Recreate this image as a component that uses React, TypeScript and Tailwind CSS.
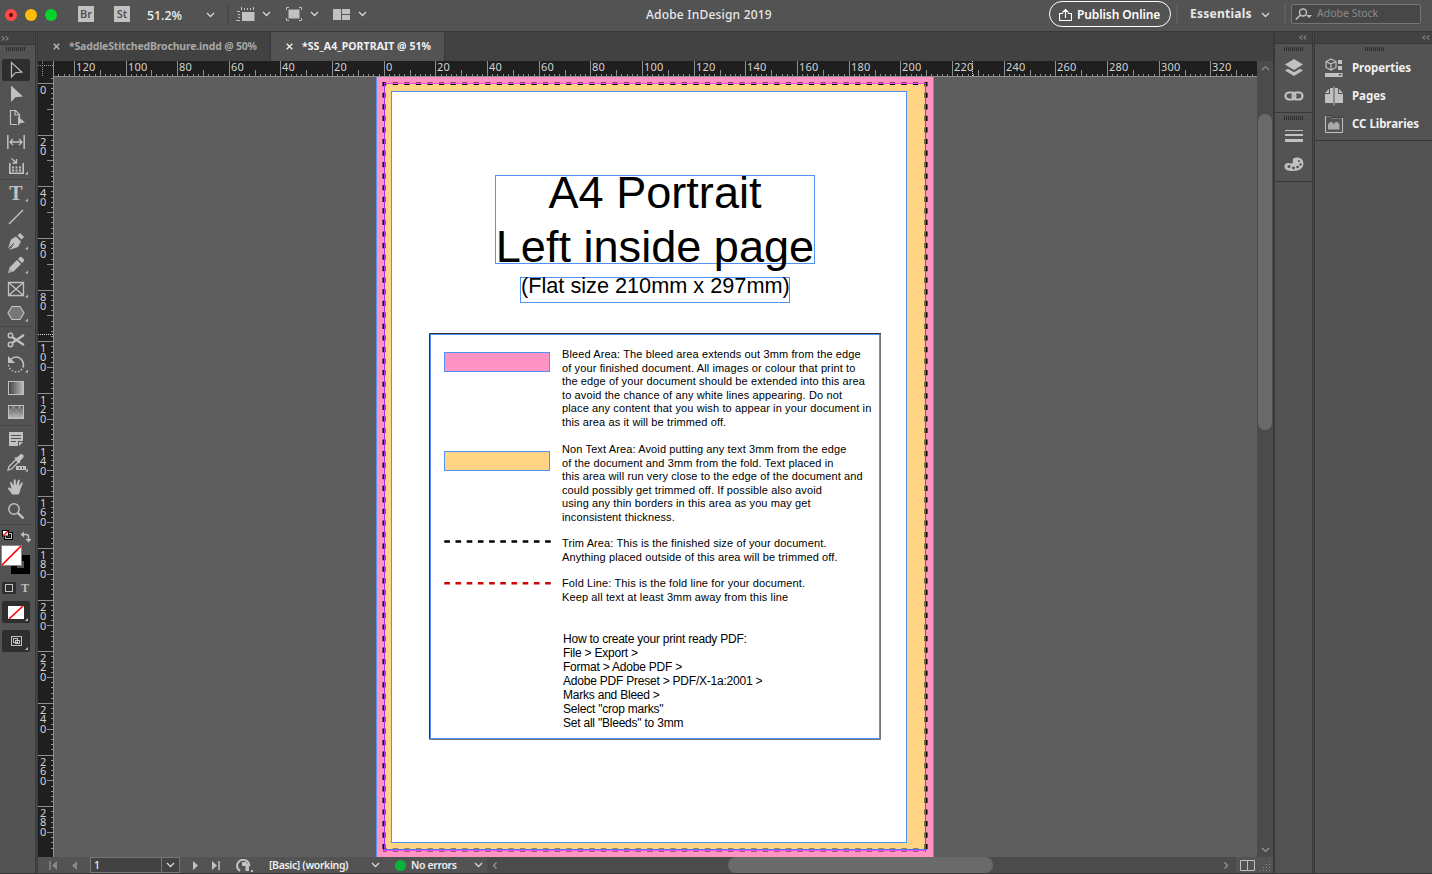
import type { ReactNode } from "react";

const ui = "font-['Noto_Sans',sans-serif]";
const doc = "font-['Liberation_Sans',sans-serif]";

function Chevron({ className = "" }: { className?: string }) {
  return (
    <svg width="9" height="6" viewBox="0 0 9 6" className={className}>
      <path d="M1 1l3.500 3.500L8 1" fill="none" stroke="#d6d6d6" strokeWidth="1.300" />
    </svg>
  );
}

function Grip() {
  return (
    <svg width="20" height="4" viewBox="0 0 20 4" className="block">
      {Array.from({ length: 10 }, (_, i) => (
        <rect key={i} x={i * 2} y="0" width="1" height="4" fill="#2e2e2e" />
      ))}
    </svg>
  );
}

function Collapse({ flip = false }: { flip?: boolean }) {
  return (
    <svg width="8" height="5" viewBox="0 0 8 5" className={flip ? "rotate-180" : ""}>
      <path d="M3 .5L1 2.500l2 2M7 .5l-2 2 2 2" fill="none" stroke="#b4b4b4" strokeWidth="1" />
    </svg>
  );
}

// Application bar

function AppBar() {
  return (
    <header className="flex h-[31px] shrink-0 items-center bg-[#535353] pb-[3px]">
      <div className="flex w-[78px] items-center gap-[8px] pl-[5px] pt-[2px]">
        <span className="flex size-[12px] items-center justify-center rounded-full bg-[#ff4b47]">
          <span className="size-[4px] rounded-full bg-[#5c0000]" />
        </span>
        <span className="size-[12px] rounded-full bg-[#ffbd05]" />
        <span className="size-[12px] rounded-full bg-[#06d32c]" />
      </div>
      <span className="flex h-[16px] w-[16px] items-center justify-center bg-[#c1c1c1] text-[11px] font-semibold text-[#535353]">
        Br
      </span>
      <span className="ml-[20px] flex h-[16px] w-[16px] items-center justify-center bg-[#c1c1c1] text-[11px] font-semibold text-[#535353]">
        St
      </span>
      <span className="ml-[17px] w-[59px] pt-[4px] text-[12.3px] font-medium text-[#f2f2f2]">51.2%</span>
      <Chevron className="mt-[2px]" />
      <span className="ml-[12px] h-[20px] w-[2px] bg-[#4a4a4a]" />
      <svg width="19" height="16" viewBox="0 0 19 16" className="ml-[7px] mt-px">
        <rect x="6" y="5" width="12.500" height="9" fill="#c1c1c1" />
        <path d="M5.500 3V0M8.500 3V1M11.500 3V1M14.500 3V1M17.500 3V0" stroke="#c1c1c1" />
        <path d="M4 4.500H1M4 7.500H2M4 10.500H2M4 13.500H0" stroke="#c1c1c1" />
      </svg>
      <Chevron className="ml-[7px]" />
      <svg width="16" height="14" viewBox="0 0 16 14" className="ml-[15px]">
        <rect x="2.500" y="2.500" width="11" height="9" fill="#c1c1c1" />
        <path d="M.5 3V.5H3M13 .5h2.500V3M.5 11v2.500H3M13 13.500h2.500V11" fill="none" stroke="#c1c1c1" />
      </svg>
      <Chevron className="ml-[8px]" />
      <svg width="17" height="11" viewBox="0 0 17 11" className="ml-[14px]">
        <path d="M0 0h8v11H0zM9 0h8v5H9zM9 6h8v5H9z" fill="#c1c1c1" />
      </svg>
      <Chevron className="ml-[8px]" />
      <h1 className="ml-[279px] w-[403px] pt-px text-[12px] font-medium tracking-[0.2px] text-[#e8e8e8]">
        Adobe InDesign 2019
      </h1>
      <button className="flex h-[26px] w-[122px] items-center rounded-full border-[1.5px] border-white pl-[9px] text-[12px] font-semibold text-white">
        <svg width="13" height="13" viewBox="0 0 13 13" className="mr-[5px]">
          <path d="M4 5.500H.5v7h12v-7H9M6.500 10V2M3.500 4.500l3-3 3 3" fill="none" stroke="#fff" strokeWidth="1.200" />
        </svg>
        <span className="whitespace-nowrap pt-px tracking-[-0.1px]">Publish Online</span>
      </button>
      <span className="ml-[5px] h-[20px] w-[2px] bg-[#5e5e5e]" />
      <span className="ml-[12px] w-[71px] text-[12px] font-bold tracking-[0.25px] text-[#e8e8e8]">Essentials</span>
      <Chevron className="mt-px" />
      <span className="ml-[14px] h-[20px] w-[2px] bg-[#5e5e5e]" />
      <div className="ml-[5px] flex h-[20px] w-[130px] items-center rounded-[2px] border border-[#757575] bg-[#474747] pl-[3px]">
        <svg width="17" height="13" viewBox="0 0 17 13">
          <circle cx="8" cy="4.500" r="3.500" fill="none" stroke="#c1c1c1" strokeWidth="1.400" />
          <path d="M5.500 7L.8 11.500" stroke="#c1c1c1" strokeWidth="1.600" />
          <path d="M11 7h6l-3 3z" fill="#c1c1c1" />
        </svg>
        <span className="ml-[5px] text-[10.5px] text-[#8b8b8b]">Adobe Stock</span>
      </div>
    </header>
  );
}

// Toolbox

const g = "#c1c1c1";

function Tool({ children, more = false, active = false }: { children: ReactNode; more?: boolean; active?: boolean }) {
  return (
    <div className="h-[24px] w-[35px]">
      <svg width="35" height="24" viewBox="0 0 35 24" className="block">
        {active && <rect x="2" y="1" width="28" height="22" rx="2" fill="#2e2e2e" />}
        {children}
        {more && <path d="M28 17.500v3h-3z" fill={g} />}
      </svg>
    </div>
  );
}

function ToolRule() {
  return <div className="h-px w-[34px] bg-[#474747]" />;
}

function Toolbox() {
  return (
    <aside className="flex w-[35px] shrink-0 flex-col bg-[#535353]">
      <div className="flex h-[12px] items-center bg-[#424242] pl-[1px]">
        <Collapse flip />
      </div>
      <div className="flex h-[14px] items-start border-t border-[#383838] pl-[6px] pt-[2px]">
        <Grip />
      </div>
      <Tool active>
        <path d="M11.500 4.500v14.500l4-4.300 6.300-.7z" fill="none" stroke={g} strokeWidth="1.200" />
      </Tool>
      <Tool>
        <path d="M11 3.500V20l4.500-4.800 7.500-.7z" fill={g} />
      </Tool>
      <Tool>
        <path d="M17 18.500h-6.500v-14h5l4 4V12M15 4.500V9h4.500" fill="none" stroke={g} strokeWidth="1.200" />
        <path d="M18 10.500v9l2.500-2.500 4.500-.5z" fill={g} />
      </Tool>
      <Tool>
        <path d="M7.800 5v14M24.200 5v14" stroke={g} strokeWidth="1.500" />
        <path d="M10 12h12M13 9l-3 3 3 3M19 9l3 3-3 3" fill="none" stroke={g} strokeWidth="1.300" />
      </Tool>
      <Tool more>
        <path d="M9.800 9v10.200h13.400V9" fill="none" stroke={g} strokeWidth="1.600" />
        <path d="M12 12.500h2v2h-2zM15.500 12.500h2v2h-2zM19 12.500h2v2h-2zM12 15.500h2v2h-2zM15.500 15.500h2v2h-2zM19 15.500h2v2h-2z" fill={g} />
        <path d="M11.500 4.500l4.500 4M16.500 5v4h-4" fill="none" stroke={g} strokeWidth="1.300" />
      </Tool>
      <div className="flex h-[3px] items-center">
        <ToolRule />
      </div>
      <Tool more>
        <text x="16" y="18.500" textAnchor="middle" fill={g} fontSize="20" fontWeight="700" fontFamily="Liberation Serif, serif">
          T
        </text>
      </Tool>
      <Tool>
        <path d="M9 19L23 5" stroke={g} strokeWidth="1.500" />
      </Tool>
      <Tool more>
        <path d="M8 19.500l3-9 5-3 5 5-3 5.500-9 3 5.500-5.500" fill={g} />
        <path d="M9 19l5-5" stroke="#535353" />
        <path d="M17.500 6.500L20 4l4 4-2.500 2.500z" fill={g} />
      </Tool>
      <Tool more>
        <path d="M8 20l1.500-5.500L17 7l4 4-7.500 7.500zM18 6l2-2q1-.5 2 .5l1.500 1.500q1 1 .5 2l-2 2z" fill={g} />
        <path d="M9.500 17l1.700 1.700" stroke="#535353" />
      </Tool>
      <Tool more>
        <path d="M8.500 5.500h15v13h-15zM8.500 5.500l15 13M23.500 5.500l-15 13" fill="none" stroke={g} strokeWidth="1.300" />
      </Tool>
      <Tool more>
        <path d="M12 5.500h8l4 6.500-4 6.500h-8L8 12z" fill="#777" stroke={g} strokeWidth="1.200" />
      </Tool>
      <div className="flex h-[3px] items-center">
        <ToolRule />
      </div>
      <Tool>
        <circle cx="10.500" cy="7.500" r="2.200" fill="none" stroke={g} strokeWidth="1.500" />
        <circle cx="10.500" cy="16.500" r="2.200" fill="none" stroke={g} strokeWidth="1.500" />
        <path d="M12 9l12 8M12 15l12-8" stroke={g} strokeWidth="2.200" />
      </Tool>
      <Tool more>
        <path d="M10.500 7.500q6-5 11 0 3 4 1.500 8" fill="none" stroke={g} strokeWidth="1.600" />
        <path d="M8 4v7h7z" fill={g} />
        <path d="M22 17q-4 5-10 1.500-3-2-3.500-6" fill="none" stroke={g} strokeWidth="1.400" strokeDasharray="1.500 1.800" />
      </Tool>
      <Tool>
        <defs>
          <linearGradient id="swatchH">
            <stop offset="0" stopColor="#444" />
            <stop offset="1" stopColor="#bbb" />
          </linearGradient>
          <linearGradient id="swatchV" x2="0" y2="1">
            <stop offset="0" stopColor="#555" />
            <stop offset="1" stopColor="#bbb" />
          </linearGradient>
        </defs>
        <rect x="8.500" y="5.500" width="15" height="13" fill="url(#swatchH)" stroke={g} />
      </Tool>
      <Tool>
        <rect x="8.500" y="5.500" width="15" height="13" fill="url(#swatchV)" stroke={g} />
        <path d="M12 6h3v3h-3zM18 6h3v3h-3zM9 9h3v3H9zM15 9h3v3h-3zM21 9h2v3h-2z" fill="#868686" />
      </Tool>
      <div className="flex h-[3px] items-center">
        <ToolRule />
      </div>
      <Tool>
        <path d="M9 5h14v9h-5v5H9zM19 15h4l-4 4z" fill={g} />
        <path d="M11 8.500h10M11 11.500h10M11 14.500h5" stroke="#535353" />
      </Tool>
      <Tool more>
        <path d="M8 19l1-3.500 7-7 2.500 2.500-7 7z" fill="none" stroke={g} strokeWidth="1.300" />
        <path d="M14.500 7l1.500-1 1 .5L20 3.500q2-1 3 0 1.500 1.500 0 3.500L20 10l.5 1-1.500 1.500z" fill={g} />
        <path d="M16 15h10v4H16z" fill={g} />
        <path d="M19.500 16v2M22.500 16v2" stroke="#535353" />
      </Tool>
      <Tool>
        <path
          d="M12 19.500q-1-2.500-4-5.500-.5-2 1.500-1.500l2 1.500L10 7.500q.8-1.500 1.800 0L13.500 11 13.700 5q1-1.500 2 0l.3 5.500L18 5q1.200-1 1.800.5L18.800 11l2.700-3.500q1.500-.5 1.300 1L20.500 14q-.5 3.500-2 5.500z"
          fill={g}
        />
      </Tool>
      <Tool>
        <circle cx="14" cy="10" r="5.200" fill="none" stroke={g} strokeWidth="1.500" />
        <path d="M17.800 13.800l5.700 5.700" stroke={g} strokeWidth="2.400" />
      </Tool>
      <div className="flex h-[3px] items-center">
        <ToolRule />
      </div>
      <svg width="35" height="130" viewBox="0 526 35 130" className="block">
        <rect x="5.500" y="533.500" width="6" height="5" fill="none" stroke="#000" strokeWidth="3" />
        <rect x="5.500" y="533.500" width="6" height="5" fill="none" stroke={g} strokeWidth="1" />
        <rect x="2.500" y="530.500" width="6" height="5.500" fill="#fff" stroke="#000" />
        <path d="M3 536l5-5" stroke="#f00" strokeWidth="1.200" />
        <path d="M23 534.500h3.500q2 0 2 2v4" fill="none" stroke={g} strokeWidth="1.500" />
        <path d="M24 531.500v6l-3.500-3zM25.500 539h6l-3 3.500z" fill={g} />
        <path d="M11 555h19v19H11zM17 561v7h7v-7z" fill="#000" fillRule="evenodd" />
        <rect x="1.500" y="545.500" width="20" height="20" fill="#fff" stroke="#888" />
        <path d="M2 565l19-19" stroke="#f00" strokeWidth="1.700" />
        <rect x="2" y="582" width="14" height="12" rx="1.500" fill="#2e2e2e" />
        <rect x="5.500" y="584.500" width="7" height="7" fill="none" stroke={g} />
        <text x="25" y="592" textAnchor="middle" fill={g} fontSize="12" fontWeight="700" fontFamily="Liberation Serif, serif">
          T
        </text>
        <rect x="2" y="601" width="28" height="22" rx="2" fill="#2e2e2e" />
        <rect x="8" y="606" width="16" height="13" fill="#fff" />
        <path d="M9 619l14-13" stroke="#f00" strokeWidth="1.700" />
        <path d="M28 618v3h-3z" fill={g} />
        <rect x="2" y="630" width="28" height="22" rx="2" fill="#2e2e2e" />
        <rect x="11.500" y="636.500" width="10" height="9" fill="none" stroke={g} />
        <rect x="13.500" y="638.500" width="4" height="4" fill="none" stroke={g} />
        <rect x="15.500" y="640.500" width="4" height="3" fill="none" stroke={g} />
        <path d="M28 647v3h-3z" fill={g} />
      </svg>
    </aside>
  );
}

// Rulers: 20mm is 51.66px on screen

const STEP = 5.166;

function TopRuler() {
  const ticks = Array.from({ length: 240 }, (_, i) => i - 70).filter((n) => {
    const x = 346.3 + n * STEP;
    return x > 15 && x < 1219;
  });
  return (
    <svg width="1219" height="16" viewBox="0 0 1219 16" className="block shrink-0 bg-[#1f1f1f]">
      <path d="M0 4.500h15M4.500 0v15" stroke="#999" strokeDasharray="1 1" />
      <path d="M15.500 0v16" stroke="#8f8f8f" />
      {ticks.map((n) => {
        const x = Math.floor(346.3 + n * STEP) + 0.5;
        const top = n % 10 === 0 ? 0 : n % 5 === 0 ? 9 : 13;
        return <path key={n} d={`M${x} ${top}V16`} stroke="#8f8f8f" />;
      })}
      {ticks
        .filter((n) => n % 10 === 0)
        .map((n) => (
          <text
            key={n}
            x={Math.floor(346.3 + n * STEP) + 2}
            y="10"
            fill="#d2d2d2"
            fontSize="11"
            letterSpacing="0.2"
            fontFamily="Noto Sans, sans-serif"
          >
            {Math.abs(n * 2)}
          </text>
        ))}
      <path d="M934.500 0v16" stroke="#ddd" strokeDasharray="1 1" />
      <path d="M15 15.500h1204" stroke="#8f8f8f" />
    </svg>
  );
}

function SideRuler() {
  const ticks = Array.from({ length: 150 }, (_, i) => i - 1);
  return (
    <svg width="16" height="780" viewBox="0 77 16 780" className="block shrink-0 bg-[#1f1f1f]">
      {ticks.map((n) => {
        const y = Math.floor(83.5 + n * STEP) + 0.5;
        const left = n % 10 === 0 ? 0 : n % 5 === 0 ? 9 : 13;
        return <path key={n} d={`M${left} ${y}H16`} stroke="#8f8f8f" />;
      })}
      {ticks
        .filter((n) => n % 10 === 0)
        .map((n) => (
          <text
            key={n}
            y={Math.floor(83.5 + n * STEP) + 2}
            fill="#d2d2d2"
            fontSize="11"
            fontFamily="Noto Sans, sans-serif"
          >
            {String(n * 2)
              .split("")
              .map((d, i) => (
                <tspan key={i} x="2" dy="9.2">
                  {d}
                </tspan>
              ))}
          </text>
        ))}
      <path d="M0 334.500h16" stroke="#ddd" strokeDasharray="1 1" />
      <path d="M15.500 77v780" stroke="#8f8f8f" />
    </svg>
  );
}

// Document page

const bleedText = [
  "Bleed Area: The bleed area extends out 3mm from the edge",
  "of your finished document. All images or colour that print to",
  "the edge of your document should be extended into this area",
  "to avoid the chance of any white lines appearing. Do not",
  "place any content that you wish to appear in your document in",
  "this area as it will be trimmed off.",
];
const nonText = [
  "Non Text Area: Avoid putting any text 3mm from the edge",
  "of the document and 3mm from the fold. Text placed in",
  "this area will run very close to the edge of the document and",
  "could possibly get trimmed off. If possible also avoid",
  "using any thin borders in this area as you may get",
  "inconsistent thickness.",
];
const trimText = ["Trim Area: This is the finished size of your document.", "Anything placed outside of this area will be trimmed off."];
const foldText = ["Fold Line: This is the fold line for your document.", "Keep all text at least 3mm away from this line"];
const howTo = [
  "How to create your print ready PDF:",
  "File > Export >",
  "Format > Adobe PDF >",
  "Adobe PDF Preset > PDF/X-1a:2001 >",
  "Marks and Bleed >",
  'Select "crop marks"',
  'Set all "Bleeds" to 3mm',
];

function Lines({ lines, className }: { lines: string[]; className: string }) {
  return (
    <div className={`absolute whitespace-nowrap ${className}`}>
      {lines.map((line) => (
        <p key={line}>{line}</p>
      ))}
    </div>
  );
}

function Page() {
  return (
    <div className={`absolute left-[322px] top-0 h-[780px] w-[558px] text-black ${doc}`}>
      <svg width="558" height="780" viewBox="376 77 558 780" className="absolute inset-0">
        <rect x="376" y="77" width="558" height="780" fill="#ff94c4" />
        <rect x="384" y="83" width="542" height="767" fill="#ffd484" />
        <rect x="391.500" y="91.500" width="515" height="751" fill="#fff" stroke="#4f94f5" />
        <path d="M376.500 77v780M933.500 77v780" stroke="#4f94f5" />
        <path d="M383 82.500h543" stroke="#000" strokeOpacity=".5" strokeDasharray="5.200 6.360" strokeDashoffset="1.800" />
        <path d="M383 84h543" stroke="#000" strokeWidth="2" strokeDasharray="5.200 6.360" strokeDashoffset="1.800" />
        <path d="M383.500 82v768M926.500 82v768" stroke="#000" strokeWidth="2" strokeDasharray="5.200 6.360" strokeDashoffset=".9" />
        <path
          d="M385.500 82v768M924.500 82v768"
          stroke="#000"
          strokeOpacity=".5"
          strokeDasharray="5.200 6.360"
          strokeDashoffset=".9"
        />
        <path d="M383 850h543" stroke="#000" strokeOpacity=".38" strokeWidth="4" strokeDasharray="5.500 6.060" strokeDashoffset="1.800" />
        <path d="M384 83.500h541.500" stroke="#ee48dc" />
        <path d="M384.500 83v767M925.500 83v767" stroke="#a02ff0" />
        <path d="M384 850.500h542" stroke="#ee48f0" />
        <path d="M385 849.500h540" stroke="#4f74f5" />
        <path d="M429.500 739V333.500H881" fill="none" stroke="#333" />
        <path d="M880.500 334v405.500H429.500" fill="none" stroke="#777" />
        <rect x="430.500" y="334.500" width="449" height="404" fill="none" stroke="#4f94f5" />
        <rect x="444.500" y="352.500" width="105" height="19" fill="#ff94c4" stroke="#4f94f5" />
        <rect x="444.500" y="451.500" width="105" height="19" fill="#ffd484" stroke="#4f94f5" />
        <path d="M444.300 541.500h106.500" stroke="#000" strokeWidth="2.500" strokeDasharray="5.600 5.600" />
        <path d="M444.300 583.300h106.500" stroke="#d40000" strokeWidth="2.500" strokeDasharray="5.600 5.600" />
      </svg>
      <div className="absolute left-[119px] top-[98px] h-[89px] w-[320px] border border-[#4f94f5] text-[45.1px] leading-[54px]">
        <div className="-mx-[4px] -mt-[10px] whitespace-nowrap text-center">
          <p>A4 Portrait</p>
          <p>Left inside page</p>
        </div>
      </div>
      <div className="absolute left-[144px] top-[200px] h-[26px] w-[270px] whitespace-nowrap border border-[#4f94f5] text-[21.7px] leading-[16px]">
        (Flat size 210mm x 297mm)
      </div>
      <Lines lines={bleedText} className="left-[186px] top-[271px] text-[11px] leading-[13.6px] tracking-[0.12px]" />
      <Lines lines={nonText} className="left-[186px] top-[366px] text-[11px] leading-[13.5px] tracking-[0.12px]" />
      <Lines lines={trimText} className="left-[186px] top-[459px] text-[11px] leading-[14px] tracking-[0.12px]" />
      <Lines lines={foldText} className="left-[186px] top-[500px] text-[11px] leading-[13.5px] tracking-[0.12px]" />
      <Lines lines={howTo} className="left-[187px] top-[555px] text-[12px] leading-[14px] tracking-[-0.22px]" />
    </div>
  );
}

function Tabs() {
  return (
    <div className="flex h-[29px] shrink-0 items-stretch bg-[#424242] text-[10.5px] font-bold">
      <div className="flex w-[233px] items-center border-r border-[#383838] pl-[15px] text-[#a8a8a8]">
        <svg width="7" height="7" viewBox="0 0 7 7" className="mr-[9px]">
          <path d="M.7.7l5.600 5.600M6.300.7L.7 6.300" stroke="#bbb" strokeWidth="1.300" />
        </svg>
        <span className="whitespace-nowrap pt-px tracking-[-0.18px]">*SaddleStitchedBrochure.indd @ 50%</span>
      </div>
      <div className="flex w-[174px] items-center border-r border-[#383838] bg-[#535353] pl-[15px] text-[#f0f0f0]">
        <svg width="7" height="7" viewBox="0 0 7 7" className="mr-[9px]">
          <path d="M.7.7l5.600 5.600M6.300.7L.7 6.300" stroke="#f0f0f0" strokeWidth="1.300" />
        </svg>
        <span className="whitespace-nowrap pt-px tracking-[0.07px]">*SS_A4_PORTRAIT @ 51%</span>
      </div>
    </div>
  );
}

function StatusBar() {
  return (
    <footer className="flex h-[16px] shrink-0 items-center bg-[#4b4b4b] text-[10.5px] font-semibold text-[#eee]">
      <div className="flex h-full w-[449px] items-center bg-[#535353]">
        <svg width="30" height="9" viewBox="0 0 30 9" className="ml-[11px] mt-px">
          <path d="M1 0v9" stroke="#888" strokeWidth="1.500" />
          <path d="M8 0v9L3 4.500zM28 0v9l-5-4.500z" fill="#888" />
        </svg>
        <div className="ml-[11px] flex h-[16px] w-[90px] items-center border border-[#757575] bg-[#424242] pl-[3px] font-medium">
          <span className="w-[67px] pt-px">1</span>
          <span className="h-full w-px bg-[#757575]" />
          <Chevron className="ml-[4px]" />
        </div>
        <svg width="30" height="9" viewBox="0 0 30 9" className="ml-[12px] mt-px">
          <path d="M1 0v9l5-4.500zM20 0v9l5-4.500z" fill={g} />
          <path d="M27 0v9" stroke={g} strokeWidth="1.500" />
        </svg>
        <svg width="18" height="13" viewBox="0 0 18 13" className="ml-[14px]">
          <path d="M4 12Q0 9 1.500 4.500 4 0 8.500 1q4.500 1 5 6" fill="none" stroke={g} strokeWidth="2" />
          <path d="M6 3h4l3 3v6H9.500V7H6z" fill={g} />
          <rect x="15" y="11" width="2" height="2" fill={g} />
        </svg>
        <span className="ml-[15px] w-[102px] whitespace-nowrap pt-[2px] tracking-[-0.35px]">[Basic] (working)</span>
        <Chevron />
        <span className="ml-[15px] mt-px size-[11px] rounded-full bg-[#0bb33b]" />
        <span className="ml-[5px] w-[63px] whitespace-nowrap pt-[2px] tracking-[-0.35px]">No errors</span>
        <Chevron />
      </div>
      <svg width="6" height="9" viewBox="0 0 6 9" className="ml-[5px] mt-px">
        <path d="M4.500 1.500l-3 3 3 3" fill="none" stroke="#999" strokeWidth="1.200" />
      </svg>
      <span className="ml-[230px] h-[16px] w-[265px] rounded-full bg-[#6a6a6a]" />
      <svg width="6" height="9" viewBox="0 0 6 9" className="ml-[230px] mt-px">
        <path d="M1.500 1.500l3 3-3 3" fill="none" stroke="#999" strokeWidth="1.200" />
      </svg>
      <div className="ml-auto flex h-full w-[37px] items-center bg-[#535353] pl-[4px]">
        <svg width="33" height="12" viewBox="0 0 33 12" className="mt-px">
          <path d="M.5.5h14v10H.5zM7.500 0v11" fill="none" stroke="#c1c1c1" />
          {[0, 1, 2, 3].map((r) =>
            Array.from({ length: r + 1 }, (_, c) => (
              <rect key={`${r}-${c}`} x={29 - c * 3} y={1 + r * 3} width="1" height="1" fill="#888" />
            ))
          )}
        </svg>
      </div>
    </footer>
  );
}

function VerticalScroll() {
  return (
    <div className="flex w-[16px] shrink-0 flex-col items-center bg-[#4b4b4b]">
      <svg width="9" height="6" viewBox="0 0 9 6" className="mt-[4px]">
        <path d="M1 5l3.500-3.500L8 5" fill="none" stroke="#8c8c8c" strokeWidth="1.200" />
      </svg>
      <span className="mt-[43px] h-[316px] w-[14px] rounded-full bg-[#6a6a6a]" />
      <svg width="9" height="6" viewBox="0 0 9 6" className="mt-auto mb-[4px]">
        <path d="M1 1l3.500 3.500L8 1" fill="none" stroke="#999" strokeWidth="1.200" />
      </svg>
    </div>
  );
}

function Workspace() {
  return (
    <main className="flex w-[1235px] shrink-0 flex-col">
      <Tabs />
      <div className="flex h-[796px]">
        <div className="flex w-[1219px] flex-col">
          <TopRuler />
          <div className="flex h-[780px]">
            <SideRuler />
            <div className="relative w-[1203px] overflow-hidden bg-[#5e5e5e]">
              <Page />
            </div>
          </div>
        </div>
        <VerticalScroll />
      </div>
      <StatusBar />
    </main>
  );
}

// Panels

function IconDock() {
  return (
    <aside className="flex w-[37px] shrink-0 flex-col bg-[#535353]">
      <div className="flex h-[11px] items-center justify-end bg-[#424242] pr-[5px]">
        <Collapse />
      </div>
      <div className="flex h-[70px] flex-col items-center border-y border-[#383838] pt-[3px]">
        <Grip />
        <svg width="18" height="18" viewBox="0 0 18 18" className="mt-[8px]">
          <path d="M9 0l9 5.500-9 5.500-9-5.500z" fill={g} />
          <path d="M0 11.500l3-1.800 6 3.600 6-3.600 3 1.800L9 17z" fill={g} />
        </svg>
        <svg width="20" height="10" viewBox="0 0 20 10" className="mt-[14px]">
          <rect x="1.500" y="1.500" width="10" height="7" rx="3.500" fill="none" stroke={g} strokeWidth="2.200" />
          <rect x="8.500" y="1.500" width="10" height="7" rx="3.500" fill="none" stroke={g} strokeWidth="2.200" />
        </svg>
      </div>
      <div className="flex h-[69px] flex-col items-center border-b border-[#383838] pt-[3px]">
        <Grip />
        <svg width="18" height="13" viewBox="0 0 18 13" className="mt-[10px]">
          <path d="M0 0h18v1H0zM0 4h18v2H0zM0 9h18v3H0z" fill={g} />
        </svg>
        <svg width="20" height="15" viewBox="0 0 20 15" className="mt-[14px]">
          <path d="M10 1q9-2 9.500 6-1 7-10 7Q1 14.500.5 10 .5 5.500 5 6q4 1.500 4-1Q8 2 10 1z" fill={g} />
          <g fill="#535353">
            <circle cx="15" cy="4" r="1.100" />
            <circle cx="16.500" cy="7.500" r="1.200" />
            <circle cx="13.500" cy="10" r="1.300" />
            <circle cx="9.500" cy="11" r="1.400" />
            <circle cx="5" cy="9.500" r="1.600" />
          </g>
        </svg>
      </div>
    </aside>
  );
}

function PanelRow({ label, children }: { label: string; children: ReactNode }) {
  return (
    <div className="flex h-[28px] items-center pl-[10px]">
      <svg width="18" height="20" viewBox="0 0 18 20" className="mr-[9px] block">
        {children}
      </svg>
      <span className="text-[11.5px] font-bold tracking-[-0.05px] text-[#f0f0f0]">{label}</span>
    </div>
  );
}

function PanelDock() {
  return (
    <aside className="flex flex-1 flex-col bg-[#535353]">
      <div className="flex h-[11px] items-center justify-end bg-[#424242] pr-[2px]">
        <Collapse />
      </div>
      <div className="flex h-[98px] flex-col border-y border-[#383838]">
        <div className="pl-[50px] pt-[3px]">
          <Grip />
        </div>
        <div className="pt-[3px]">
          <PanelRow label="Properties">
            <path d="M6 1l5 2.500v6L6 12 1 9.500v-6zM1 3.500L6 6l5-2.500M6 6v6" fill="none" stroke={g} strokeWidth="1.200" />
            <path d="M13 2h4v4h-4zM13 8h4v4h-4zM0 15h17.500v4H0z" fill={g} />
            <path d="M13.500 16h3L15 18z" fill="#444" />
          </PanelRow>
          <PanelRow label="Pages">
            <path d="M5 2h3v15H0V8h5zM13 2h-3v15h8V8h-5zM4 3v4H0zM14 3v4h4z" fill={g} />
            <path d="M9 .5v19" stroke={g} />
          </PanelRow>
          <PanelRow label="CC Libraries">
            <path d="M.5 18.500V2.500h6l1 2h10v14z" fill="none" stroke={g} />
            <path d="M1 2h5.500l1 2H17" fill="none" stroke="#2e2e2e" />
            <path d="M3 15.500V9.500h1.500V8h3v1.500h2.500V8h3v1.500H14.500v6z" fill="#aaa" />
          </PanelRow>
        </div>
      </div>
    </aside>
  );
}

export default function App() {
  return (
    <div className={`flex h-[874px] w-[1432px] flex-col overflow-hidden bg-[#383838] ${ui}`}>
      <AppBar />
      <div className="mt-px flex h-[841px]">
        <Toolbox />
        <div className="w-[3px] shrink-0 border-x border-[#383838] bg-[#484848]" />
        <Workspace />
        <div className="w-[2px] shrink-0 bg-[#383838]" />
        <IconDock />
        <div className="w-[3px] shrink-0 border-x border-[#383838] bg-[#484848]" />
        <PanelDock />
      </div>
    </div>
  );
}
